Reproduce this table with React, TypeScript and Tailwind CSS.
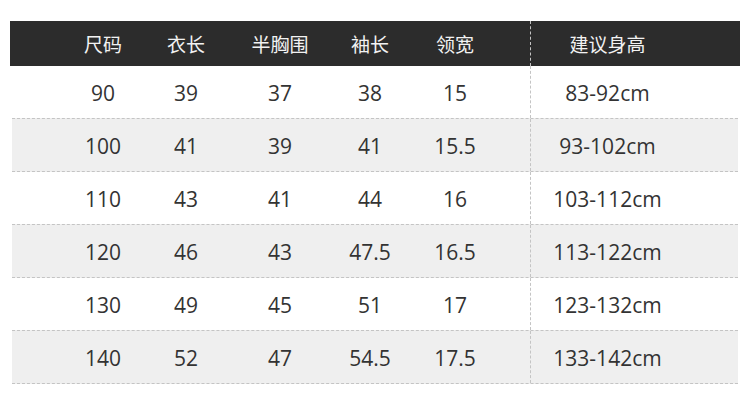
const heads = ['尺码', '衣长', '半胸围', '袖长', '领宽', '建议身高']

const rows = [
  ['90', '39', '37', '38', '15', '83-92cm'],
  ['100', '41', '39', '41', '15.5', '93-102cm'],
  ['110', '43', '41', '44', '16', '103-112cm'],
  ['120', '46', '43', '47.5', '16.5', '113-122cm'],
  ['130', '49', '45', '51', '17', '123-132cm'],
  ['140', '52', '47', '54.5', '17.5', '133-142cm'],
]

const widths = ['w-[82px]', 'w-[84px]', 'w-[104px]', 'w-[76px]', 'w-[94px]']

function Cells({ values }: { values: string[] }) {
  return (
    <>
      {values.slice(0, 5).map((v, i) => (
        <div key={i} className={`${widths[i]} flex shrink-0 justify-center pt-[3px]`}>
          {v}
        </div>
      ))}
      <div className="w-[28px] shrink-0" />
      <div className="flex h-full w-[154px] shrink-0 items-center justify-center border-l border-dashed border-[#c4c4c4] pt-[3px]">
        {values[5]}
      </div>
    </>
  )
}

export default function App() {
  return (
    <main
      className="min-h-[407px] w-[750px] bg-white pt-[21px]"
      style={{ fontFamily: '"Open Sans", "Noto Sans CJK SC", sans-serif' }}
    >
      <div className="mx-[10px] w-[730px]">
        <div className="flex h-[45px] items-center bg-[#2c2c2c] pl-[52px] text-[19px] text-[#f2f2f2]">
          <Cells values={heads} />
        </div>
        {rows.map((r, i) =>
          i % 2 === 1 ? (
            <div
              key={i}
              className="mx-[2px] flex h-[54px] items-center border-y border-dashed border-[#c4c4c4] bg-[#efefef] pl-[50px] text-[21px] text-[#333]"
            >
              <Cells values={r} />
            </div>
          ) : (
            <div
              key={i}
              className="flex h-[52px] items-center pl-[52px] text-[21px] text-[#333]"
            >
              <Cells values={r} />
            </div>
          )
        )}
      </div>
    </main>
  )
}
